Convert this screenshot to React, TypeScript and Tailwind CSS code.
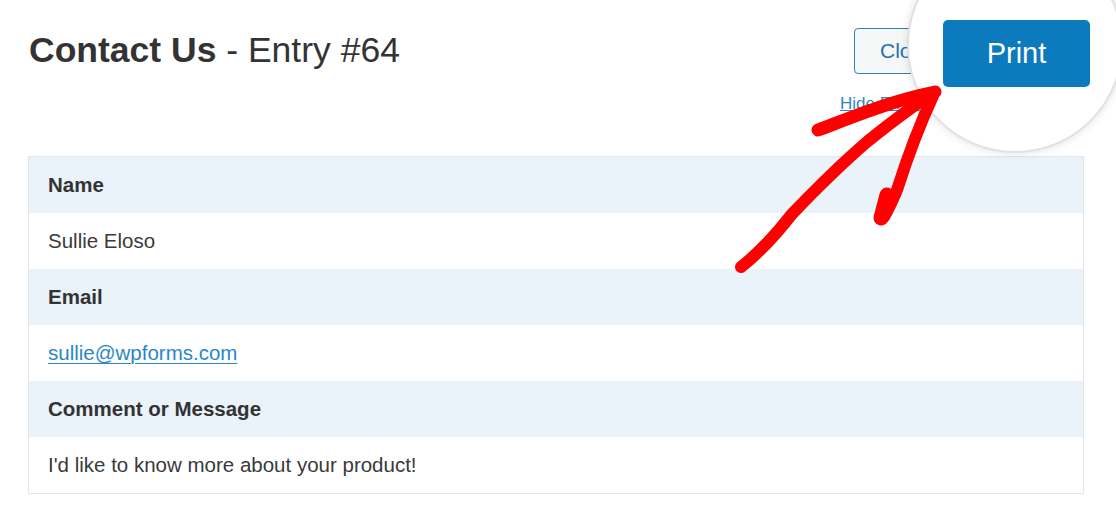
import React from "react";

const rows: { label: string; value: React.ReactNode }[] = [
  { label: "Name", value: "Sullie Eloso" },
  {
    label: "Email",
    value: (
      <a href="#" className="text-[#2b87c3] underline underline-offset-[3px] decoration-1">
        sullie@wpforms.com
      </a>
    ),
  },
  { label: "Comment or Message", value: "I'd like to know more about your product!" },
];

export default function App() {
  return (
    <div className="relative w-[1116px] h-[528px] overflow-hidden bg-white font-['Liberation_Sans',Arial,sans-serif] text-[#333]">
      {/* Header */}
      <div className="flex items-start pl-[29px] pt-[20px]">
        <h1 className="mt-[9px] flex-1 text-[35.5px] leading-[42px] whitespace-nowrap">
          <span className="font-bold">Contact Us</span>
          <span className="font-normal"> - Entry #64</span>
        </h1>
        <div className="w-[276px] flex flex-col items-start">
          <div className="flex items-start pl-[14px]">
            <button className="mt-[8px] h-[46px] w-[104px] rounded-[4px] border border-[#2f7fb8] bg-[#f6f7f7] pl-[25px] text-left text-[21px] text-[#2271b1]">
              Close
            </button>
          </div>
          <a href="#" className="mt-[20px] text-[17px] leading-[20px] text-[#2b87c3] underline whitespace-nowrap">
            Hide Empty Fields
          </a>
        </div>
      </div>

      {/* Table */}
      <div className="ml-[28px] mt-[42px] w-[1056px] border border-[#e3e6ea]">
        {rows.map((r) => (
          <React.Fragment key={r.label}>
            <div className="flex h-[56px] items-center bg-[#eaf2fa] pl-[19px] text-[20.5px] font-bold text-[#333]">
              {r.label}
            </div>
            <div className="flex h-[56px] items-center bg-white pl-[19px] text-[20.5px] text-[#3a3a3a]">
              {r.value}
            </div>
          </React.Fragment>
        ))}
      </div>

      {/* Magnifier circle */}
      <div className="absolute left-[907px] top-[-63px] h-[216px] w-[216px] rounded-full border-2 border-[#e2e2e2] bg-white shadow-[0_0_8px_rgba(0,0,0,0.12)]">
        <div className="absolute left-[34px] top-[81px] flex h-[67px] w-[147px] items-center justify-center rounded-[5px] bg-[#0b7bbd] text-[29px] text-white">
          Print
        </div>
      </div>

      {/* Red arrow */}
      <svg
        className="pointer-events-none absolute left-0 top-0"
        width="1116"
        height="528"
        viewBox="0 0 1116 528"
        fill="none"
      >
        <g stroke="#fe0000" strokeLinecap="round" strokeLinejoin="round">
          <path d="M741 267 C 760 252, 778 232, 792 214 C 815 190, 840 165, 868 141 C 893 121, 915 104, 934 93" strokeWidth="12" />
          <path d="M818 130 C 850 118, 890 101, 935 92" strokeWidth="13" />
          <path d="M933 96 C 918 128, 905 165, 897 190 C 892 202, 888 210, 884 217" strokeWidth="12" />
          <path d="M887 195 L 881 218" strokeWidth="15" />
        </g>
      </svg>
    </div>
  );
}
